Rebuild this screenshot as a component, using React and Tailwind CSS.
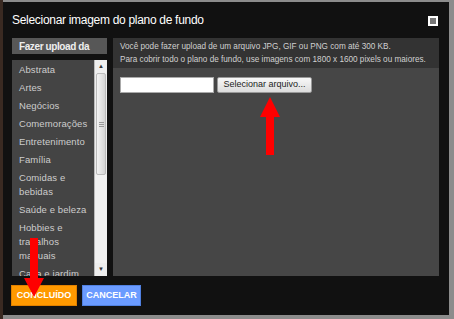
const categories = [
  "Abstrata",
  "Artes",
  "Negócios",
  "Comemorações",
  "Entretenimento",
  "Família",
  "Comidas e bebidas",
  "Saúde e beleza",
  "Hobbies e trabalhos manuais",
  "Casa e jardim",
];

function Scrollbar() {
  return (
    <div className="flex flex-col w-[13px] shrink-0 bg-[#eee] border-l border-[#bbb]">
      <div className="h-[13px] flex items-center justify-center text-[6px] text-[#333]">▲</div>
      <div className="mx-[1px] h-[102px] rounded-[2px] bg-gradient-to-r from-[#f4f4f4] to-[#d4d4d4] border border-[#bbb] flex items-center justify-center">
        <div className="w-[5px] flex flex-col gap-[1px]">
          <div className="h-px bg-[#999]" />
          <div className="h-px bg-[#999]" />
          <div className="h-px bg-[#999]" />
        </div>
      </div>
      <div className="flex-1 bg-[#f2f2f2]" />
      <div className="h-[13px] flex items-center justify-center text-[6px] text-[#333]">▼</div>
    </div>
  );
}

function Arrow({ className, down }) {
  return (
    <svg className={className} width="22" height="60" viewBox="0 0 22 60">
      {down ? (
        <path d="M7 0 H15 V40 H21 L11 59 L1 40 H7 Z" fill="#f00" />
      ) : (
        <path d="M11 0 L21 20 H15 V58 H7 V20 H1 Z" fill="#f00" />
      )}
    </svg>
  );
}

export default function App() {
  return (
    <div className="w-[454px] h-[319px] bg-[#8c8c8c] pt-[2px] pr-[5px] pb-[4px] border-l-[3px] border-[#3a2a22] font-['Liberation_Sans',sans-serif]">
      <div className="relative w-[446px] h-[313px] bg-[#111] flex flex-col">
        <div className="h-[36px] flex items-center justify-between pl-[9px] pr-[11px]">
          <span className="text-[12px] text-white tracking-[-0.3px]">Selecionar imagem do plano de fundo</span>
          <div className="w-[10px] h-[10px] border-[2px] border-white bg-[#777] mt-[1px]" />
        </div>
        <div className="flex h-[238px] pl-[9px] pr-[10px] gap-[6px]">
          <div className="w-[95px] shrink-0 flex flex-col gap-[6px]">
            <div className="h-[16px] bg-[#575757] flex items-center px-[7px] text-[10px] font-bold text-[#eee] tracking-[-0.4px]">
              Fazer upload da
            </div>
            <div className="flex-1 flex bg-[#444] overflow-hidden">
              <ul className="flex-1 pl-[7px] pr-[2px] pt-[3px] text-[9.5px] leading-[14px] text-[#cdcdcd] tracking-[0.1px]">
                {categories.map((c) => (
                  <li key={c} className="mb-[4px]">{c}</li>
                ))}
              </ul>
              <Scrollbar />
            </div>
          </div>
          <div className="flex-1 min-w-0 bg-[#464646] flex flex-col">
            <div className="h-[30px] bg-[#333] px-[7px] pt-[2px] text-[8.2px] leading-[13px] text-[#d0d0d0] whitespace-nowrap">
              <p>Você pode fazer upload de um arquivo JPG, GIF ou PNG com até 300 KB.</p>
              <p>Para cobrir todo o plano de fundo, use imagens com 1800 x 1600 pixels ou maiores.</p>
            </div>
            <div className="flex gap-[3px] mt-[9px] ml-[7px]">
              <div className="w-[94px] h-[16px] bg-white border border-[#aaa]" />
              <div className="w-[95px] h-[16px] bg-gradient-to-b from-[#f8f8f8] to-[#dcdcdc] border border-[#999] rounded-[2px] flex items-center justify-center text-[9px] text-[#222]">
                Selecionar arquivo...
              </div>
            </div>
          </div>
        </div>
        <div className="flex gap-[5px] pl-[8px] pt-[9px]">
          <button className="w-[66px] h-[21px] bg-[#ff9900] border border-[#e08000] text-white text-[9px] font-bold">CONCLUÍDO</button>
          <button className="w-[59px] h-[21px] bg-[#6b9bff] border border-[#5080e0] text-white text-[9px] font-bold">CANCELAR</button>
        </div>
        <Arrow className="absolute left-[256px] top-[95px]" />
        <Arrow className="absolute left-[20px] top-[236px]" down />
      </div>
    </div>
  );
}
